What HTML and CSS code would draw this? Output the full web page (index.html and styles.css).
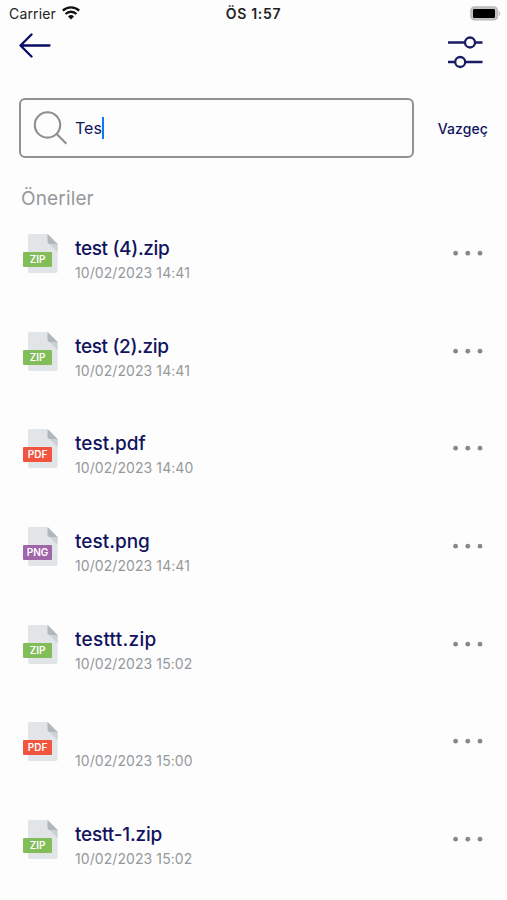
FILE: index.html
```html
<!DOCTYPE html>
<html lang="tr">
<head>
<meta charset="utf-8">
<title>Arama</title>
<link rel="stylesheet" href="styles.css">
</head>
<body>
<svg width="0" height="0" class="defs" aria-hidden="true">
  <symbol id="page" viewBox="0 0 30 39">
    <path d="M1.5 0H20L29.6 10V37a2 2 0 0 1-2 2H2a2 2 0 0 1-2-2V1.5A1.5 1.5 0 0 1 1.5 0Z" fill="#e2e5e7"/>
    <path d="M21 9.5 29.6 18V9.5Z" fill="#cad1d8"/>
    <path d="M19.5 0 29.6 10H21.5a2 2 0 0 1-2-2Z" fill="#b0b7bd"/>
  </symbol>
  <symbol id="dots" viewBox="0 0 30 6">
    <g fill="#898989"><circle cx="2.6" cy="3.2" r="2.4"/><circle cx="14.8" cy="3.2" r="2.4"/><circle cx="27" cy="3.2" r="2.4"/></g>
  </symbol>
</svg>
<div class="status">
  <div class="carrier"><span>Carrier</span>
    <svg width="18" height="14" viewBox="0 0 18 14" fill="none" stroke="#111" stroke-width="2.4"><path d="M.8 4.7a11.8 11.8 0 0 1 16.4 0"/><path d="M3.6 8a7.7 7.7 0 0 1 10.8 0"/><path d="M6 10.5a4.3 4.3 0 0 1 6 0L9 13.6Z" fill="#111" stroke="none"/></svg>
  </div>
  <div class="time">ÖS 1:57</div>
  <svg class="battery" width="31" height="15" viewBox="0 0 31 15"><rect x="1" y="1" width="26.4" height="12.8" rx="3.6" fill="#c4c4c4" stroke="#b9b9b9" stroke-width="1.6"/><rect x="3" y="3" width="22" height="9" rx="1.2" fill="#000"/><path d="M28.8 5a3 3 0 0 1 0 5Z" fill="#b5b5b5"/></svg>
</div>
<header class="nav">
  <svg class="back" width="32" height="25" viewBox="0 0 32 25" fill="none" stroke="#090b62" stroke-width="2.3" stroke-linecap="round" stroke-linejoin="round"><path d="M12.5 1.5 1.5 12.5l11 11M1.5 12.5H30.5"/></svg>
  <svg class="filter" width="36" height="34" viewBox="0 0 36 34" fill="none" stroke="#191b65" stroke-width="2.3"><path d="M0 7.5H16.5M27.5 7.5h7M0 27H7M17.5 27h17"/><circle cx="22" cy="7.5" r="5"/><circle cx="12.2" cy="27" r="5"/></svg>
</header>
<div class="search-row">
  <div class="search">
    <svg width="36" height="36" viewBox="0 0 36 36" fill="none" stroke="#8c8f90" stroke-width="2.1"><circle cx="14.5" cy="14.9" r="12.7"/><path d="m23.4 23.8 10 10"/></svg>
    <span class="query">Tes</span><i class="caret"></i>
  </div>
  <span class="cancel">Vazgeç</span>
</div>
<h2>Öneriler</h2>
<ul class="files">
  <li><div class="icon zip"><svg width="30" height="39"><use href="#page"/></svg><b>ZIP</b></div><div class="info"><div class="name tight">test (4).zip</div><div class="date">10/02/2023 14:41</div></div><svg class="more" width="30" height="6"><use href="#dots"/></svg></li>
  <li><div class="icon zip"><svg width="30" height="39"><use href="#page"/></svg><b>ZIP</b></div><div class="info"><div class="name tight">test (2).zip</div><div class="date">10/02/2023 14:41</div></div><svg class="more" width="30" height="6"><use href="#dots"/></svg></li>
  <li><div class="icon pdf"><svg width="30" height="39"><use href="#page"/></svg><b>PDF</b></div><div class="info"><div class="name">test.pdf</div><div class="date">10/02/2023 14:40</div></div><svg class="more" width="30" height="6"><use href="#dots"/></svg></li>
  <li><div class="icon png"><svg width="30" height="39"><use href="#page"/></svg><b>PNG</b></div><div class="info"><div class="name">test.png</div><div class="date">10/02/2023 14:41</div></div><svg class="more" width="30" height="6"><use href="#dots"/></svg></li>
  <li><div class="icon zip"><svg width="30" height="39"><use href="#page"/></svg><b>ZIP</b></div><div class="info"><div class="name loose">testtt.zip</div><div class="date">10/02/2023 15:02</div></div><svg class="more" width="30" height="6"><use href="#dots"/></svg></li>
  <li><div class="icon pdf"><svg width="30" height="39"><use href="#page"/></svg><b>PDF</b></div><div class="info"><div class="name empty"></div><div class="date">10/02/2023 15:00</div></div><svg class="more" width="30" height="6"><use href="#dots"/></svg></li>
  <li><div class="icon zip"><svg width="30" height="39"><use href="#page"/></svg><b>ZIP</b></div><div class="info"><div class="name dash">testt-1.zip</div><div class="date">10/02/2023 15:02</div></div><svg class="more" width="30" height="6"><use href="#dots"/></svg></li>
</ul>
</body>
</html>
```
FILE: styles.css
```css
* { box-sizing: border-box; }
body { margin: 0; height: 900px; overflow: hidden; background: #fdfdfd; font-family: Inter, "Liberation Sans", sans-serif; color: #11135f; }
svg { display: block; flex: none; }
.defs { position: absolute; }
.status { height: 28px; display: grid; grid-template-columns: 1fr auto 1fr; align-items: center; padding: 0 6px 0 9px; color: #222; font-size: 14px; line-height: 28px; }
.carrier { display: flex; align-items: center; gap: 6px; letter-spacing: .15px; }
.carrier svg { margin-top: -2px; }
.time { font-weight: 600; font-size: 14px; letter-spacing: .7px; margin-right: 3px; }
.battery { justify-self: end; margin-top: -2px; }
.nav { height: 70px; display: flex; justify-content: space-between; align-items: flex-start; padding: 5px 23px 0 19px; }
.filter { margin-top: 2px; }
.search-row { height: 60px; display: flex; align-items: center; justify-content: space-between; padding: 0 19px; }
.search { width: 395px; height: 60px; border: 2px solid #929292; border-radius: 6px; display: flex; align-items: center; padding-left: 12px; }
.query { margin-left: 6px; font-size: 16px; }
.caret { width: 2.5px; height: 22px; background: #087cf5; }
.cancel { font-size: 14px; font-weight: 500; letter-spacing: .1px; }
h2 { margin: 29px 0 0 21px; height: 24px; line-height: 24px; font-size: 19px; font-weight: 400; letter-spacing: .15px; color: #96999b; }
.files { list-style: none; margin: 23px 0 0; padding: 0 24px 0 23px; }
.files li { height: 97.7px; display: flex; align-items: flex-start; }
.icon { position: relative; width: 35px; height: 39px; padding-left: 5px; }
.icon b { position: absolute; left: 0; top: 18px; width: 29px; height: 15px; border-radius: 1px; color: #fff; font-size: 10px; line-height: 15px; font-weight: 600; text-align: center; }
.zip b { background: #82bd59; }
.pdf b { background: #f1553f; }
.png b { background: #a066aa; }
.info { flex: 1; margin-left: 17px; }
.name { height: 29px; line-height: 29px; font-size: 19px; font-weight: 500; }
.tight { letter-spacing: -.35px; }
.loose { letter-spacing: .25px; }
.dash { letter-spacing: -.2px; }
.date { height: 20px; line-height: 20px; font-size: 14px; letter-spacing: .08px; color: #96999b; }
.more { margin-top: 16px; }
```
